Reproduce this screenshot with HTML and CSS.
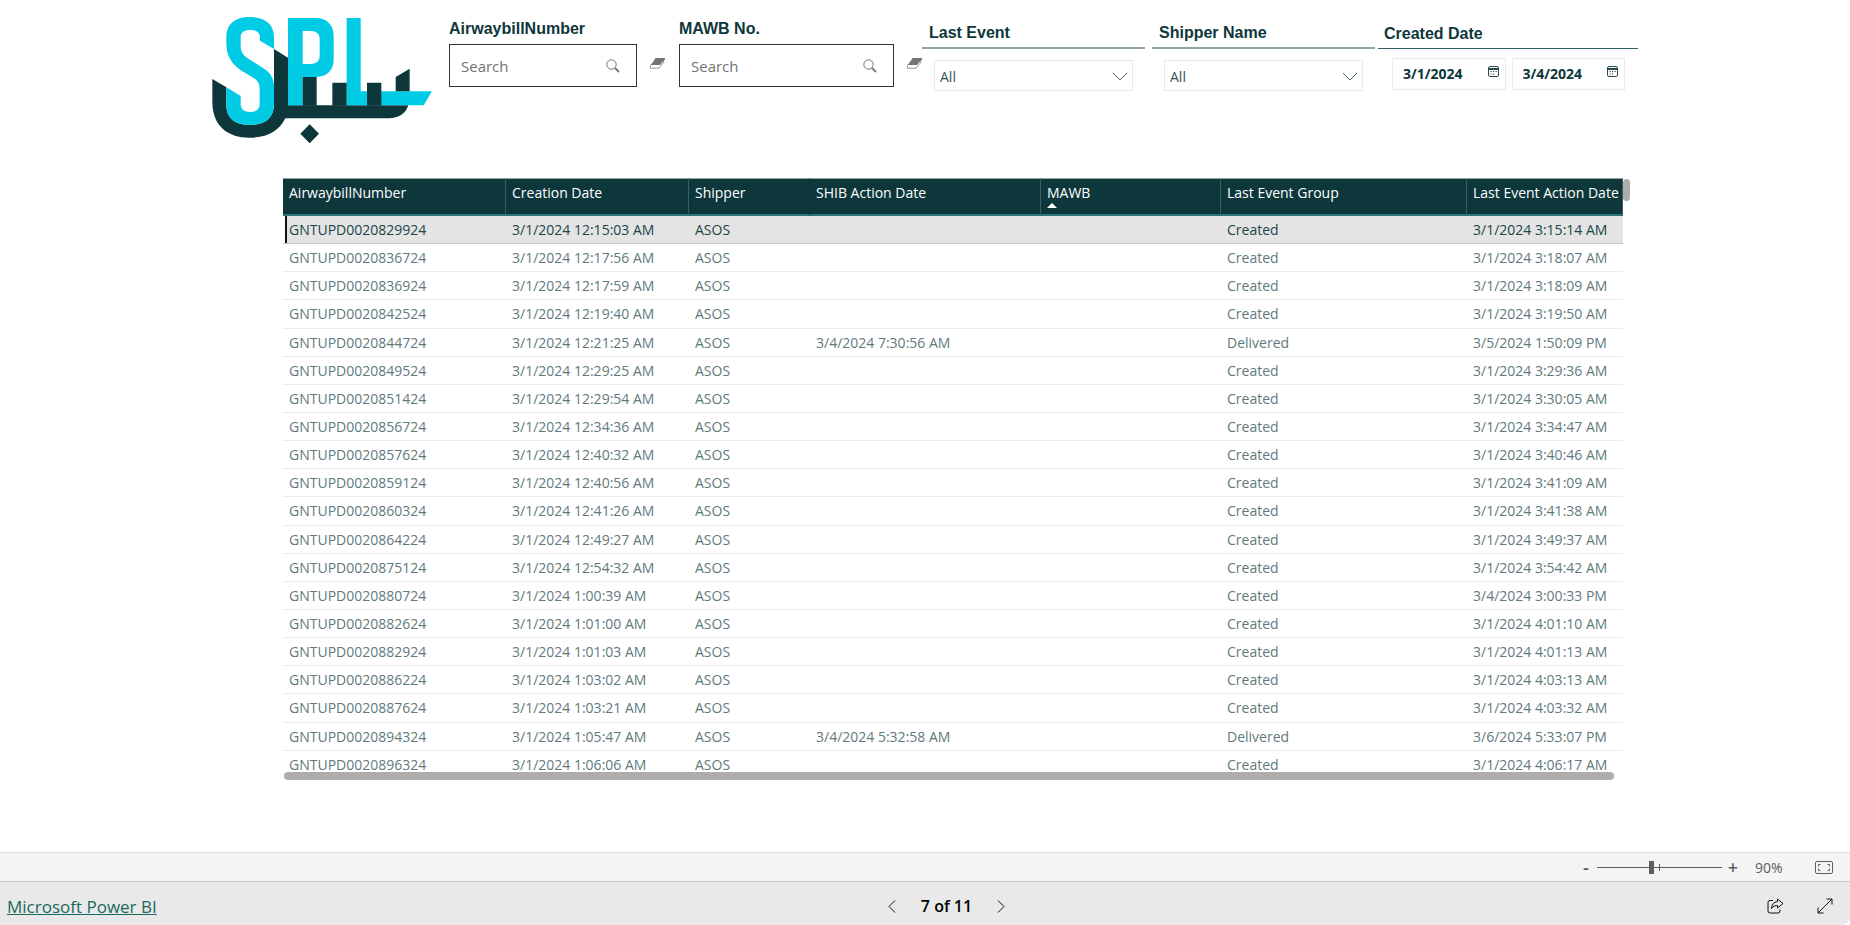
FILE: index.html
```html
<!DOCTYPE html>
<html lang="en">
<head>
  <meta charset="utf-8">
  <meta name="viewport" content="width=device-width, initial-scale=1">
  <title>Microsoft Power BI</title>
  <link rel="stylesheet" href="styles.css">
</head>

<body>
  <main class="report">
    <div class="canvas">
      <div class="filters">
        <svg class="logo" viewBox="36 51 660 381" role="img" aria-label="SPL">
          <path fill="#0e373b" d="M37 237L79 262V315C79 355 105 375 150 375C197 375 222 352 222 312V147L265 174V316H625C617 340 598 355 565 355H256C238 392 203 413 150 413C80 413 37 375 37 305Z"/>
          <path fill="#00cbe4" d="M222 147V112C222 72 195 51 150 51C105 51 79 72 79 112V130C79 166 95 192 120 209L162 235C175 244 179 252 179 268V312C179 328 168 336 150 336C133 336 122 328 122 312V288L79 262V315C79 355 105 375 150 375C197 375 222 352 222 312V260C222 236 212 218 192 206L143 175C128 165 122 153 122 138V112C122 96 133 90 150 90C168 90 180 96 180 112V122Z"/>
          <path fill="#00cbe4" fill-rule="evenodd" d="M264 54H348C381 54 401 75 401 108V178C401 212 381 231 348 231H308V316H264ZM308 93V192H332C350 192 359 183 359 166V118C359 102 350 93 332 93Z"/>
          <path fill="#00cbe4" d="M440 54H482V274H696L671 316H440Z"/>
          <path fill="#0e373b" d="M308 231H350V317H308ZM397 248H440V317H397ZM501 248H544V317H501ZM587 231L629 206V274H587ZM329 373L357 401L329 430L301 401Z"/>
        </svg>

        <div class="text-filter awb">
          <label class="title" for="awb">AirwaybillNumber</label>
          <div class="search-row">
            <div class="search">
              <input type="text" id="awb" placeholder="Search">
              <button type="button" aria-label="Search"><svg width="14" height="14" viewBox="0 0 14 14"><circle cx="5.5" cy="5.5" r="4.7"/><path d="M9 9l4 4" stroke-width="1.8"/></svg></button>
            </div>
            <button type="button" class="eraser" aria-label="Clear"><svg width="16" height="13" viewBox="0 0 16 13"><path d="M1 7.500h9L14.500 2.500v3L9.500 11.500H.5V8.500z" fill="#fff" stroke="#8a8a8a"/><path d="M6 .5h10v1.500L10.500 8H1z" fill="#737373"/></svg></button>
          </div>
        </div>

        <div class="text-filter">
          <label class="title" for="mawb">MAWB No.</label>
          <div class="search-row">
            <div class="search">
              <input type="text" id="mawb" placeholder="Search">
              <button type="button" aria-label="Search"><svg width="14" height="14" viewBox="0 0 14 14"><circle cx="5.5" cy="5.5" r="4.7"/><path d="M9 9l4 4" stroke-width="1.8"/></svg></button>
            </div>
            <button type="button" class="eraser" aria-label="Clear"><svg width="16" height="13" viewBox="0 0 16 13"><path d="M1 7.500h9L14.500 2.500v3L9.500 11.500H.5V8.500z" fill="#fff" stroke="#8a8a8a"/><path d="M6 .5h10v1.500L10.500 8H1z" fill="#737373"/></svg></button>
          </div>
        </div>

        <div class="slicer">
          <label class="title" for="event">Last Event</label>
          <div class="dropdown">
            <select id="event"><option>All</option></select>
            <svg width="16" height="9" viewBox="0 0 16 9"><path d="M1 1l7 7 7-7"/></svg>
          </div>
        </div>

        <div class="slicer shipper">
          <label class="title" for="shipper">Shipper Name</label>
          <div class="dropdown">
            <select id="shipper"><option>All</option></select>
            <svg width="16" height="9" viewBox="0 0 16 9"><path d="M1 1l7 7 7-7"/></svg>
          </div>
        </div>

        <div class="slicer created">
          <label class="title" for="from">Created Date</label>
          <div class="dates">
            <div class="date">
              <input type="text" id="from" value="3/1/2024">
              <button type="button" aria-label="Pick start date"><svg width="11" height="11" viewBox="0 0 11 11"><rect x=".5" y=".5" width="10" height="10" rx="1.500"/><path d="M1 2.500h9M1 3.500h9M2.500 5.500h1.200M5 5.500h1.200M7.500 5.500h1.200M2.500 8h1.200M5 8h1.200"/></svg></button>
            </div>
            <div class="date">
              <input type="text" id="to" value="3/4/2024" aria-label="End date">
              <button type="button" aria-label="Pick end date"><svg width="11" height="11" viewBox="0 0 11 11"><rect x=".5" y=".5" width="10" height="10" rx="1.500"/><path d="M1 2.500h9M1 3.500h9M2.500 5.500h1.200M5 5.500h1.200M7.500 5.500h1.200M2.500 8h1.200M5 8h1.200"/></svg></button>
            </div>
          </div>
        </div>
      </div>

      <div class="grid">
        <div class="rows">
          <table>
            <colgroup>
              <col class="c-awb"><col class="c-created"><col class="c-shipper"><col class="c-shib"><col class="c-mawb"><col class="c-group"><col class="c-action">
            </colgroup>
            <thead>
              <tr>
                <th>AirwaybillNumber</th>
                <th>Creation Date</th>
                <th class="plain">Shipper</th>
                <th>SHIB Action Date</th>
                <th>MAWB<span class="sort"></span></th>
                <th>Last Event Group</th>
                <th>Last Event Action Date</th>
              </tr>
            </thead>
            <tbody id="data"></tbody>
          </table>
        </div>
        <div class="vbar"></div>
        <div class="hbar"></div>
      </div>
    </div>
  </main>

  <div class="zoombar">
    <button type="button" class="sign" aria-label="Zoom out">-</button>
    <input type="range" class="slider" min="10" max="190" value="88" aria-label="Zoom">
    <button type="button" class="sign" aria-label="Zoom in">+</button>
    <span class="percent">90%</span>
    <button type="button" class="fit" aria-label="Fit to page"><svg width="18" height="13" viewBox="0 0 18 13"><rect x=".5" y=".5" width="17" height="12" rx="1.500"/><path d="M3.500 5.500v-2h2M12.500 3.500h2v2M14.500 7.500v2h-2M5.500 9.500h-2v-2"/></svg></button>
  </div>

  <footer class="statusbar">
    <a href="#">Microsoft Power BI</a>
    <nav class="pager">
      <button type="button" aria-label="Previous page"><svg width="8" height="13" viewBox="0 0 8 13"><path d="M7 .5l-6 6 6 6"/></svg></button>
      <span>7 of 11</span>
      <button type="button" aria-label="Next page"><svg width="8" height="13" viewBox="0 0 8 13"><path d="M1 .5l6 6-6 6"/></svg></button>
    </nav>
    <div class="tools">
      <button type="button" aria-label="Share"><svg width="17" height="16" viewBox="0 0 17 16"><path d="M6 2.500H3Q1 2.500 1 4.500V13Q1 15 3 15H11Q13 15 13 13V11.500"/><path d="M10.500 1L16 5.500L10.500 10V7.500Q6.500 7 4.500 10.500Q5 4 10.500 3.500Z"/></svg></button>
      <button type="button" aria-label="Full screen"><svg width="16" height="16" viewBox="0 0 16 16"><path d="M1 15L15 1M9.500 1H15V6.500M1 9.500V15H6.500"/></svg></button>
    </div>
  </footer>

  <script>
    // airwaybill suffix, creation time, last event time, SHIB action date
    var rows = [
      ["829924", "3/1/2024 12:15:03 AM", "3/1/2024 3:15:14 AM"],
      ["836724", "3/1/2024 12:17:56 AM", "3/1/2024 3:18:07 AM"],
      ["836924", "3/1/2024 12:17:59 AM", "3/1/2024 3:18:09 AM"],
      ["842524", "3/1/2024 12:19:40 AM", "3/1/2024 3:19:50 AM"],
      ["844724", "3/1/2024 12:21:25 AM", "3/5/2024 1:50:09 PM", "3/4/2024 7:30:56 AM"],
      ["849524", "3/1/2024 12:29:25 AM", "3/1/2024 3:29:36 AM"],
      ["851424", "3/1/2024 12:29:54 AM", "3/1/2024 3:30:05 AM"],
      ["856724", "3/1/2024 12:34:36 AM", "3/1/2024 3:34:47 AM"],
      ["857624", "3/1/2024 12:40:32 AM", "3/1/2024 3:40:46 AM"],
      ["859124", "3/1/2024 12:40:56 AM", "3/1/2024 3:41:09 AM"],
      ["860324", "3/1/2024 12:41:26 AM", "3/1/2024 3:41:38 AM"],
      ["864224", "3/1/2024 12:49:27 AM", "3/1/2024 3:49:37 AM"],
      ["875124", "3/1/2024 12:54:32 AM", "3/1/2024 3:54:42 AM"],
      ["880724", "3/1/2024 1:00:39 AM", "3/4/2024 3:00:33 PM"],
      ["882624", "3/1/2024 1:01:00 AM", "3/1/2024 4:01:10 AM"],
      ["882924", "3/1/2024 1:01:03 AM", "3/1/2024 4:01:13 AM"],
      ["886224", "3/1/2024 1:03:02 AM", "3/1/2024 4:03:13 AM"],
      ["887624", "3/1/2024 1:03:21 AM", "3/1/2024 4:03:32 AM"],
      ["894324", "3/1/2024 1:05:47 AM", "3/6/2024 5:33:07 PM", "3/4/2024 5:32:58 AM"],
      ["896324", "3/1/2024 1:06:06 AM", "3/1/2024 4:06:17 AM"]
    ];
    var html = "";
    rows.forEach(function(r, i) {
      var cells = ["GNTUPD0020" + r[0], r[1], "ASOS", r[3] || "", "", r[3] ? "Delivered" : "Created", r[2]];
      html += (i == 0 ? '<tr class="selected">' : "<tr>") + "<td>" + cells.join("</td><td>") + "</td></tr>";
    });
    document.getElementById("data").innerHTML = html;
  </script>
</body>
</html>
```
FILE: styles.css
```css
* {
  box-sizing: border-box;
}

body {
  margin: 0;
  min-height: 100vh;
  display: flex;
  flex-direction: column;
  background: #fff;
  color: #0e373b;
  font-family: "Open Sans", "Noto Sans", sans-serif;
  font-size: 14px;
}

button {
  background: none;
  border: none;
  padding: 0;
  display: flex;
  cursor: pointer;
  font-family: inherit;
}

svg {
  display: block;
  fill: none;
}

.report {
  flex: 1;
  padding: 17px 16px 0;
}

.canvas {
  max-width: 1426px;
  margin: 0 auto;
}

/* filters */
.filters {
  display: grid;
  grid-template-columns: minmax(0, 237fr) minmax(0, 230fr) minmax(0, 243fr) minmax(0, 230fr) minmax(0, 226fr) minmax(0, 260fr);
  height: 161px;
  align-items: start;
}

.logo {
  width: 220px;
  height: 127px;
}

.title {
  display: block;
  font-family: "Liberation Sans", Arial, sans-serif;
  font-size: 16px;
  font-weight: bold;
  line-height: 24px;
  white-space: nowrap;
}

.text-filter .title {
  margin-bottom: 3px;
}

.awb {
  padding-right: 14px;
}

.search-row {
  display: flex;
  align-items: center;
  gap: 13px;
}

.search {
  flex: 1;
  min-width: 0;
  height: 43px;
  display: flex;
  align-items: center;
  border: 1px solid #333;
  padding: 0 16px 0 11px;
}

.search input {
  flex: 1;
  min-width: 0;
  border: none;
  outline: none;
  padding: 0;
  font-family: inherit;
  font-size: 15px;
}

.search input::placeholder {
  color: #737373;
}

.search svg {
  stroke: #737373;
}

.eraser {
  width: 15px;
  padding-bottom: 4px;
}

.slicer {
  padding-right: 7px;
}

.shipper {
  padding-right: 3px;
}

.created {
  padding-right: 0;
}

.slicer .title {
  padding: 4px 7px 0;
  height: 32px;
  border-bottom: 2px solid #8fa5a6;
}

.dropdown {
  position: relative;
  margin: 11px 12px 0;
}

.dropdown select {
  display: block;
  width: 100%;
  height: 31px;
  padding: 2px 5px 0;
  border: 1px solid #eaeaea;
  background: #fff;
  appearance: none;
  color: #2f5256;
  font-family: inherit;
  font-size: 14px;
}

.dropdown svg {
  position: absolute;
  right: 5px;
  top: 12px;
  stroke: #4a6468;
  pointer-events: none;
}

.created .title {
  padding: 5px 6px 0;
  border-bottom: 1px solid #2f5f62;
}

.dates {
  display: flex;
  gap: 6px;
  margin: 9px 13px 0 14px;
}

.date {
  flex: 1;
  min-width: 0;
  height: 32px;
  display: flex;
  align-items: center;
  border: 1px solid #eaeaea;
  padding: 0 6px 2px 10px;
}

.date input {
  flex: 1;
  min-width: 0;
  border: none;
  outline: none;
  padding: 0;
  color: #0e373b;
  font-family: inherit;
  font-size: 14px;
  font-weight: bold;
}

.date button {
  padding-bottom: 3px;
}

.date svg {
  stroke: #2a4a4d;
}

/* table */
.grid {
  display: grid;
  grid-template-columns: 1fr 7px;
  margin: 0 8px 0 71px;
}

.rows {
  height: 594px;
  overflow: hidden;
}

table {
  width: 100%;
  height: 601px;
  table-layout: fixed;
  border-collapse: separate;
  border-spacing: 0;
}

.c-awb { width: 223px; }
.c-created { width: 183px; }
.c-shipper { width: 121px; }
.c-shib { width: 231px; }
.c-mawb { width: 180px; }
.c-group { width: 246px; }
.c-action { width: 156px; }

th {
  height: 38px;
  padding: 4px 0 0 6px;
  background: #0e373b;
  border-top: 1px solid #8fa5a6;
  border-bottom: 2px solid #2f7478;
  border-right: 1px solid #3e5f62;
  color: #fff;
  font-weight: normal;
  line-height: 19px;
  text-align: left;
  vertical-align: top;
  white-space: nowrap;
}

th.plain {
  border-right-color: #0e373b;
}

.sort {
  display: block;
  width: 0;
  margin-top: 1px;
  border: 5px solid transparent;
  border-top: none;
  border-bottom-color: #fff;
}

td {
  padding: 0 0 0 6px;
  border-bottom: 1px solid #ebebeb;
  color: #5f7a7d;
  white-space: nowrap;
}

.selected td {
  background: #e4e4e4;
  border-bottom-color: #c8c8c8;
  color: #1d4448;
}

.selected td:first-child {
  box-shadow: inset 2px 0 #fff, inset 4px 0 #111;
}

.vbar {
  height: 22px;
  margin-top: 1px;
  border-radius: 4px;
  background: #aeadac;
}

.hbar {
  height: 8px;
  margin: 0 9px 0 1px;
  border-radius: 4px;
  background: #aeadac;
}

/* bottom bars */
.zoombar {
  height: 29px;
  display: flex;
  align-items: center;
  justify-content: flex-end;
  padding-right: 17px;
  background: #f4f4f4;
  border-top: 1px solid #dcdcdc;
  color: #605e5c;
}

.sign {
  width: 12px;
  justify-content: center;
  color: #605e5c;
  font-size: 18px;
  font-weight: 600;
  line-height: 20px;
}

.slider {
  appearance: none;
  width: 125px;
  height: 14px;
  margin: 0 5px;
  background: linear-gradient(#605e5c, #605e5c) 62px center / 1px 7px no-repeat,
    linear-gradient(#605e5c, #605e5c) center / 100% 1px no-repeat;
}

.slider::-webkit-slider-thumb {
  appearance: none;
  width: 5px;
  height: 13px;
  background: #605e5c;
}

.percent {
  width: 60px;
  margin-left: 16px;
}

.fit svg {
  stroke: #605e5c;
}

.statusbar {
  height: 44px;
  display: grid;
  grid-template-columns: 1fr auto 1fr;
  align-items: center;
  padding: 5px 17px 0 7px;
  background: #e9e9e9;
  border-top: 1px solid #c6c6c6;
  border-bottom-right-radius: 8px;
}

.statusbar a {
  color: #17695e;
  font-size: 17px;
}

.statusbar svg {
  stroke: #111;
}

.pager {
  display: flex;
  align-items: center;
  gap: 25px;
  padding-left: 53px;
  color: #000;
  font-size: 16px;
  font-weight: 600;
}

.tools {
  display: flex;
  justify-content: flex-end;
  gap: 33px;
}
```
